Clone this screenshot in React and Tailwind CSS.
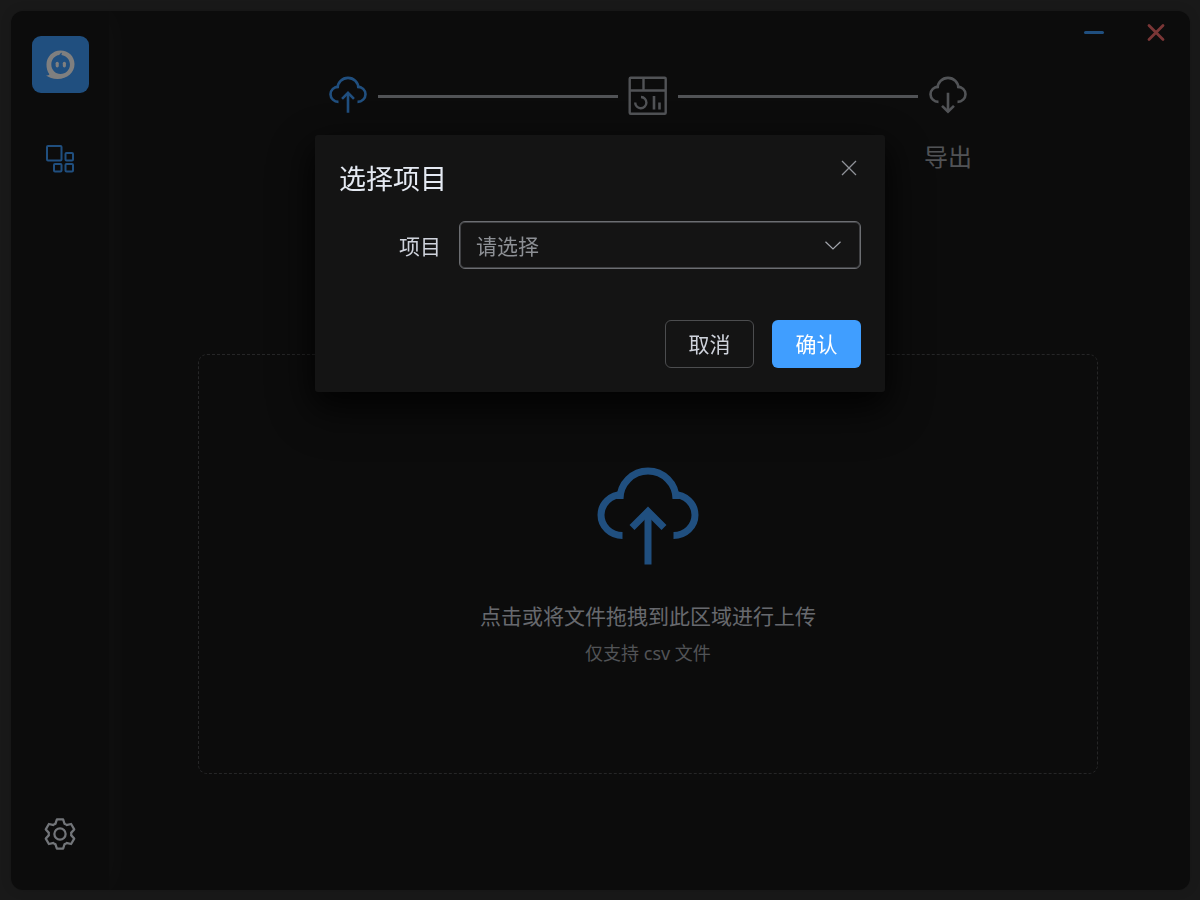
import { useId } from "react";

function CloudIcon({ direction, className }) {
  return (
    <svg viewBox="0 0 102 102" fill="none" stroke="currentColor" strokeWidth="7" className={className} aria-hidden="true">
      <path d="M25.500 69.500A21.500 20.500 0 0 1 25.500 28.500" />
      <path d="M76.500 69.500A21.500 20.500 0 0 0 76.500 28.500" />
      <path d="M23 33A28 28 0 0 1 79 33" />
      {direction === "up" ? (
        <>
          <path d="M51 98.500V46" />
          <path d="M35 61.500L51 45.500L67 61.500" />
        </>
      ) : (
        <>
          <path d="M51 45V96" />
          <path d="M35 80L51 96L67 80" />
        </>
      )}
    </svg>
  );
}

function ChartIcon({ className }) {
  return (
    <svg viewBox="0 0 40 40" fill="none" stroke="currentColor" strokeWidth="2.400" className={className} aria-hidden="true">
      <rect x="1.700" y="1.700" width="36" height="36" rx="1" />
      <path d="M2 14.500H38M15.500 2V14.500" />
      <path d="M13 21A5.600 5.600 0 1 1 7.200 26.500" />
      <path d="M26 20V33.500M31.500 26.500V33.500" strokeWidth="2.600" />
    </svg>
  );
}

function LogoIcon({ className }) {
  return (
    <svg viewBox="0 0 30 30" className={className} aria-hidden="true">
      <path
        fill="currentColor"
        fillRule="evenodd"
        d="M15 0.500C23 0.500 29.500 6.500 29.500 14.500C29.500 23.500 22 30 12 30C7 30 3 28.500 0 26.500C1.500 26.500 3 26 3.500 25C1.200 22 0.500 18.500 0.500 15C0.500 7 7 0.500 15 0.500ZM16.800 2.500C15.200 3 14.200 4 13.800 5.200C9 5.700 5.500 9.800 5.500 15C5.500 20.500 9.700 24.800 15 24.800C20.500 24.800 24.800 20.500 24.800 15C24.800 10.500 21.800 6.800 17.800 5.600L16 5.200C16 4.200 16.200 3.300 16.800 2.500Z"
      />
      <rect x="10" y="12.200" width="3.200" height="5.800" rx="1.600" fill="currentColor" />
      <rect x="17.400" y="12.200" width="3.200" height="5.800" rx="1.600" fill="currentColor" />
    </svg>
  );
}

function BlocksIcon({ className }) {
  return (
    <svg viewBox="0 0 28 28" fill="none" stroke="currentColor" strokeWidth="2" className={className} aria-hidden="true">
      <rect x="1" y="1" width="14.500" height="14.500" rx="1" />
      <rect x="19.500" y="8" width="7.500" height="7.500" rx="1" />
      <rect x="8" y="19" width="7.500" height="7.500" rx="1" />
      <rect x="19.500" y="19" width="7.500" height="7.500" rx="1" />
    </svg>
  );
}

function GearIcon({ className }) {
  return (
    <svg viewBox="0 0 1024 1024" fill="currentColor" className={className} aria-hidden="true">
      <path d="M600.704 64a32 32 0 0 1 30.464 22.208l35.200 109.376c14.784 7.232 28.928 15.360 42.432 24.512l112.384-24.192a32 32 0 0 1 34.432 15.360L944.320 364.800a32 32 0 0 1-4.032 37.504l-77.120 85.120a357.120 357.120 0 0 1 0 49.024l77.120 85.248a32 32 0 0 1 4.032 37.504l-88.704 153.600a32 32 0 0 1-34.432 15.296L708.800 803.904c-13.440 9.088-27.648 17.280-42.368 24.512l-35.264 109.376A32 32 0 0 1 600.704 960H423.296a32 32 0 0 1-30.464-22.208L357.696 828.480a351.616 351.616 0 0 1-42.560-24.640l-112.320 24.256a32 32 0 0 1-34.432-15.360L79.680 659.200a32 32 0 0 1 4.032-37.504l77.120-85.248a357.120 357.120 0 0 1 0-48.896l-77.120-85.248A32 32 0 0 1 79.680 364.800l88.704-153.600a32 32 0 0 1 34.432-15.296l112.320 24.256c13.568-9.152 27.776-17.408 42.560-24.640l35.200-109.312A32 32 0 0 1 423.232 64H600.640zm-23.424 64H446.720l-36.352 113.088-24.512 11.968a294.113 294.113 0 0 0-34.816 20.096l-22.656 15.360-116.224-25.088-65.280 113.152 79.680 88.192-1.920 27.136a293.120 293.120 0 0 0 0 40.192l1.920 27.136-79.808 88.192 65.344 113.152 116.224-25.024 22.656 15.296a294.113 294.113 0 0 0 34.816 20.096l24.512 11.968L446.720 896h130.688l36.480-113.152 24.448-11.904a288.282 288.282 0 0 0 34.752-20.096l22.592-15.296 116.288 25.024 65.280-113.152-79.744-88.192 1.920-27.136a293.120 293.120 0 0 0 0-40.256l-1.920-27.136 79.808-88.128-65.344-113.152-116.288 24.960-22.592-15.232a287.616 287.616 0 0 0-34.752-20.096l-24.448-11.904L577.344 128zM512 320a192 192 0 1 1 0 384 192 192 0 0 1 0-384zm0 64a128 128 0 1 0 0 256 128 128 0 0 0 0-256z" />
    </svg>
  );
}

function Sidebar() {
  return (
    <aside className="flex w-[98px] shrink-0 flex-col items-center rounded-l-xl pt-[25px] pb-[38px] shadow-[0_0_36px_rgba(255,255,255,0.05)]">
      <div className="flex size-[57px] items-center justify-center rounded-[9px] bg-[#409eff] text-white">
        <LogoIcon className="size-[29px]" />
      </div>
      <nav className="mt-[52px]">
        <button type="button" aria-label="工作台" className="block text-[#409eff]">
          <BlocksIcon className="size-7" />
        </button>
      </nav>
      <button type="button" aria-label="设置" className="mt-auto block text-[#e5eaf3]">
        <GearIcon className="size-9" />
      </button>
    </aside>
  );
}

function Steps() {
  return (
    <ol className="flex w-[640px] items-start justify-between">
      <li className="flex w-10 justify-center text-[#409eff]">
        <CloudIcon direction="up" className="size-[38px]" />
      </li>
      <li aria-hidden="true" className="mt-[19px] h-[3px] w-60 bg-[#a3a6ad]" />
      <li className="flex w-10 justify-center text-[#a3a6ad]">
        <ChartIcon className="size-10" />
      </li>
      <li aria-hidden="true" className="mt-[19px] h-[3px] w-60 bg-[#a3a6ad]" />
      <li className="flex w-10 flex-col items-center text-[#a3a6ad]">
        <CloudIcon direction="down" className="size-[38px]" />
        <span className="mt-2 text-2xl leading-[70px] whitespace-nowrap">导出</span>
      </li>
    </ol>
  );
}

function UploadArea() {
  return (
    <button
      type="button"
      className="mr-[92px] ml-[89px] flex h-[420px] flex-col items-center rounded-[9px] border border-dashed border-[#4c4d4f] pt-[111px] text-center"
    >
      <CloudIcon direction="up" className="size-[102px] text-[#409eff]" />
      <span className="mt-8 text-[21px] leading-[32px] text-[#cfd3dc]">点击或将文件拖拽到此区域进行上传</span>
      <span className="mt-[7px] text-lg leading-[28px] text-[#a3a6ad]">仅支持 csv 文件</span>
    </button>
  );
}

function ProjectDialog() {
  const titleId = useId();
  const selectId = useId();
  return (
    <div className="fixed inset-0 flex items-start justify-center bg-black/50 pt-[135px]">
      <form
        role="dialog"
        aria-modal="true"
        aria-labelledby={titleId}
        onSubmit={(event) => event.preventDefault()}
        className="w-[570px] rounded-[3px] bg-[#141414] px-6 pb-6 shadow-[0_18px_48px_6px_rgba(0,0,0,0.36),0_12px_30px_rgba(0,0,0,0.72)]"
      >
        <header className="flex items-start justify-between">
          <h2 id={titleId} className="pt-[26px] text-[27px] leading-[36px] text-[#e5eaf3]">
            选择项目
          </h2>
          <button type="button" aria-label="关闭" className="mt-[21px] flex size-6 items-center justify-center text-[#909399]">
            <svg viewBox="0 0 16 16" fill="none" stroke="currentColor" strokeWidth="1.300" className="size-4" aria-hidden="true">
              <path d="M1 1L15 15M15 1L1 15" />
            </svg>
          </button>
        </header>
        <div className="mt-6 flex items-center">
          <label htmlFor={selectId} className="w-[102px] pt-1 text-right text-[21px] text-[#cfd3dc]">
            项目
          </label>
          <div className="relative ml-[18px] flex-1">
            <select
              id={selectId}
              defaultValue=""
              className="block h-12 w-full appearance-none rounded-md border border-[#6c6e72] bg-transparent pt-1 pr-12 pl-4 text-[21px] text-[#8d9095] shadow-[inset_0_0_0_1px_#3f4043] outline-none"
            >
              <option value="">请选择</option>
            </select>
            <svg
              viewBox="0 0 16 9"
              fill="none"
              stroke="currentColor"
              strokeWidth="1.200"
              className="pointer-events-none absolute top-5 right-5 h-[9px] w-4 text-[#a3a6ad]"
              aria-hidden="true"
            >
              <path d="M0.500 0.800L8 8L15.500 0.800" />
            </svg>
          </div>
        </div>
        <footer className="mt-[51px] flex justify-end gap-[18px] text-[21px]">
          <button type="button" className="h-12 w-[89px] rounded-md border border-[#4c4d4f] pt-0.5 text-[#cfd3dc]">
            取消
          </button>
          <button type="submit" className="h-12 w-[89px] rounded-md bg-[#409eff] pt-0.5 text-white">
            确认
          </button>
        </footer>
      </form>
    </div>
  );
}

export default function App() {
  return (
    <div className="flex min-h-screen bg-[#323232] p-[10px] pt-[11px] pl-[11px] font-['Noto_Sans','Noto_Sans_CJK_SC',sans-serif]">
      <div className="flex flex-1 overflow-hidden rounded-xl bg-[#181818] shadow-[0_0_12px_rgba(0,0,0,0.12)]">
        <Sidebar />
        <main className="flex min-w-0 flex-1 flex-col">
          <div className="flex h-[65px] justify-end gap-10 pt-[11px] pr-[23px]">
            <button type="button" aria-label="最小化" className="flex size-[22px] items-center justify-center text-[#409eff]">
              <svg viewBox="0 0 22 22" stroke="currentColor" strokeWidth="3" strokeLinecap="round" className="size-[22px]" aria-hidden="true">
                <path d="M2.500 10.500H19.500" />
              </svg>
            </button>
            <button type="button" aria-label="关闭窗口" className="flex size-[22px] items-center justify-center text-[#f56c6c]">
              <svg viewBox="0 0 22 22" stroke="currentColor" strokeWidth="2.800" strokeLinecap="round" className="size-[22px]" aria-hidden="true">
                <path d="M4 3.500L18 17.500M18 3.500L4 17.500" />
              </svg>
            </button>
          </div>
          <div className="flex justify-center pr-[3px]">
            <Steps />
          </div>
          <div className="mt-auto mb-[116px] flex flex-col">
            <UploadArea />
          </div>
        </main>
      </div>
      <ProjectDialog />
    </div>
  );
}
